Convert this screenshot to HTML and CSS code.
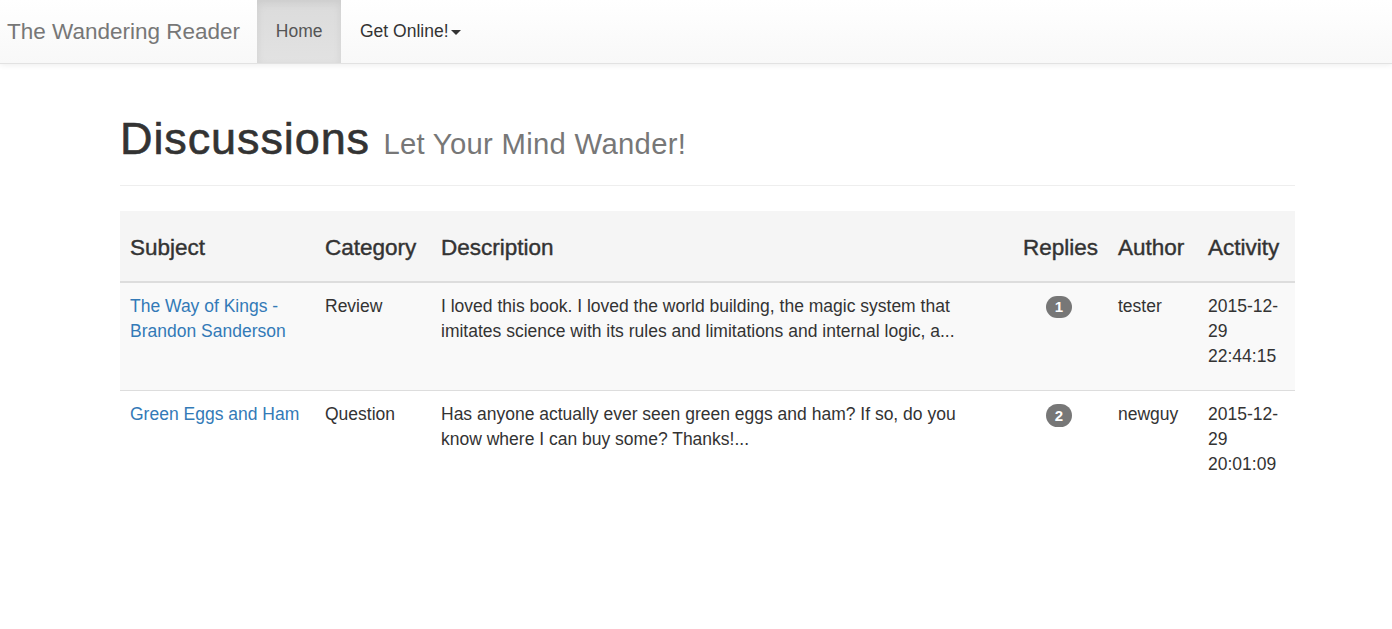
FILE: index.html
```html
<!DOCTYPE html>
<html lang="en">
<head>
<meta charset="utf-8">
<title>The Wandering Reader</title>
<link rel="stylesheet" href="styles.css">
</head>
<body>
<nav class="navbar">
  <a class="brand" href="#">The Wandering Reader</a>
  <ul class="nav">
    <li class="active"><a href="#">Home</a></li>
    <li><a href="#" class="dark">Get Online!<span class="caret"></span></a></li>
  </ul>
</nav>
<main class="container">
  <div class="page-header">
    <h1>Discussions <small>Let Your Mind Wander!</small></h1>
  </div>
  <table class="table">
    <colgroup>
      <col class="c-subject"><col class="c-category"><col class="c-desc"><col class="c-replies"><col class="c-author"><col class="c-activity">
    </colgroup>
    <thead>
      <tr>
        <th><h4>Subject</h4></th>
        <th><h4>Category</h4></th>
        <th><h4>Description</h4></th>
        <th class="center"><h4>Replies</h4></th>
        <th><h4>Author</h4></th>
        <th><h4>Activity</h4></th>
      </tr>
    </thead>
    <tbody>
      <tr class="odd">
        <td><a href="#">The Way of Kings - Brandon Sanderson</a></td>
        <td>Review</td>
        <td><p>I loved this book. I loved the world building, the magic system that<br>imitates science with its rules and limitations and internal logic, a...</p></td>
        <td class="center"><span class="badge">1</span></td>
        <td>tester</td>
        <td><p>2015-12-29 22:44:15</p></td>
      </tr>
      <tr>
        <td><a href="#">Green Eggs and Ham</a></td>
        <td>Question</td>
        <td><p>Has anyone actually ever seen green eggs and ham? If so, do you<br>know where I can buy some? Thanks!...</p></td>
        <td class="center"><span class="badge">2</span></td>
        <td>newguy</td>
        <td><p>2015-12-29 20:01:09</p></td>
      </tr>
    </tbody>
  </table>
</main>
</body>
</html>
```

FILE: styles.css
```css
* { box-sizing: border-box; }
html, body { margin: 0; padding: 0; }
body {
  font-family: "Liberation Sans", Arial, Helvetica, sans-serif;
  font-size: 17.5px;
  line-height: 25px;
  color: #333;
  background: #fff;
}
a { color: #337ab7; text-decoration: none; }

.navbar {
  display: flex;
  align-items: stretch;
  height: 63.5px;
  background: linear-gradient(to bottom, #fff 0, #f8f8f8 100%);
  border-bottom: 1px solid #e2e2e2;
  box-shadow: 0 1px 6px rgba(0,0,0,.075);
}
.brand {
  display: block;
  padding: 18.75px 17px 18.75px 7px;
  font-size: 22.5px;
  line-height: 25px;
  color: #777;
}
.nav {
  display: flex;
  list-style: none;
  margin: 0;
  padding: 0;
}
.nav li a {
  display: block;
  padding: 18.75px;
  line-height: 25px;
  color: #333;
}
.nav li.active a {
  color: #555;
  background: linear-gradient(to bottom, #dbdbdb 0, #e2e2e2 100%);
  box-shadow: inset 0 3px 9px rgba(0,0,0,.075);
}
.caret {
  display: inline-block;
  width: 0;
  height: 0;
  margin-left: 2.5px;
  vertical-align: middle;
  border-top: 5px solid #333;
  border-left: 5px solid transparent;
  border-right: 5px solid transparent;
}

.container {
  width: 1175px;
  margin-left: 120px;
}
.page-header {
  margin: 50px 0 25px;
  padding-bottom: 9.25px;
  border-bottom: 1.25px solid #eee;
}
.page-header h1 {
  margin: 0 0 12.5px;
  font-size: 45px;
  line-height: 1.1;
  font-weight: 500;
  color: #333;
  letter-spacing: 0.9px;
  -webkit-text-stroke: 0.6px #333;
}
.page-header h1 small {
  font-size: 65%;
  font-weight: normal;
  color: #777;
  letter-spacing: 0.3px;
  -webkit-text-stroke: 0;
}

.table {
  width: 100%;
  border-collapse: collapse;
  table-layout: fixed;
}
.c-subject { width: 195px; }
.c-category { width: 116px; }
.c-desc { width: 579px; }
.c-replies { width: 98px; }
.c-author { width: 90px; }
.c-activity { width: 97px; }

.table thead tr { background: #f5f5f5; }
.table th {
  padding: 10px;
  text-align: left;
  vertical-align: bottom;
  border-bottom: 2.5px solid #ddd;
}
.table th h4 {
  margin: 15px 0 10px;
  font-size: 22.5px;
  line-height: 1.1;
  font-weight: 500;
  -webkit-text-stroke: 0.4px #333;
}
.table td {
  padding: 11px 10px 10px;
  vertical-align: top;
  border-top: 1.25px solid #ddd;
}
.table tbody tr.odd { background: #f9f9f9; }
.table td p { margin: 0 0 11.5px; }
.center { text-align: center; }
.table th.center { text-align: right; }

.badge {
  display: inline-block;
  min-width: 25px;
  padding: 3.75px 8.75px;
  font-size: 15px;
  font-weight: bold;
  line-height: 1;
  color: #fff;
  text-align: center;
  white-space: nowrap;
  vertical-align: middle;
  background: #777;
  border-radius: 12.5px;
}
```
